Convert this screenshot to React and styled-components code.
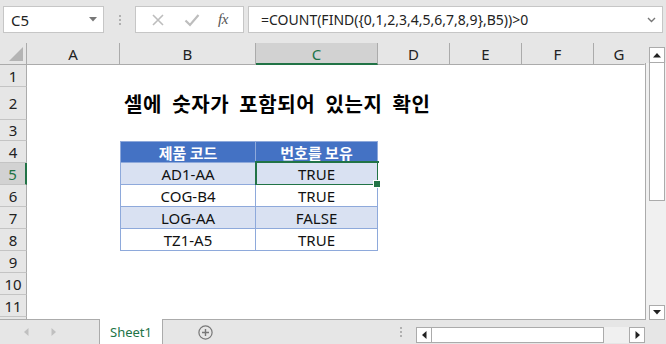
import React from "react";
import styled, { createGlobalStyle } from "styled-components";

const Global = createGlobalStyle`
  html, body { margin: 0; padding: 0; background: #ffffff; }
  * { box-sizing: border-box; }
`;

const UI = `"Noto Sans", "Open Sans", "Noto Sans CJK KR", sans-serif`;
const KR = `"Noto Sans CJK KR", "Noto Sans", sans-serif`;

const Root = styled.div`
  width: 666px;
  height: 344px;
  background: #e6e6e6;
  display: flex;
  flex-direction: column;
  overflow: hidden;
  font-family: ${UI};
`;

const Toolbar = styled.div`
  height: 43px;
  flex: none;
  display: flex;
  align-items: flex-start;
  padding: 6px 3px 0 3px;
`;

const NameBox = styled.div`
  width: 101px;
  height: 27px;
  background: #fff;
  border: 1px solid #c6c6c6;
  display: flex;
  align-items: center;
  justify-content: space-between;
  padding: 0 6px 0 7px;
  font-size: 15px;
  color: #222;
`;

const Grip = styled.div`
  width: 31px;
  height: 27px;
  display: flex;
  flex-direction: column;
  align-items: center;
  justify-content: center;
  gap: 2px;
  & > span {
    width: 2px;
    height: 2px;
    background: #b0b0b0;
  }
`;

const FxBox = styled.div`
  width: 109px;
  height: 27px;
  background: #fff;
  border: 1px solid #c6c6c6;
  display: flex;
  align-items: center;
  justify-content: space-around;
  padding: 0 6px;
`;

const Fx = styled.span`
  font-family: "Liberation Serif", "DejaVu Serif", serif;
  font-style: italic;
  font-size: 15px;
  color: #555;
  letter-spacing: -0.5px;
`;

const FormulaInput = styled.div`
  width: 415px;
  height: 27px;
  margin-left: 4px;
  background: #fff;
  border: 1px solid #c6c6c6;
  display: flex;
  align-items: center;
  justify-content: space-between;
  padding: 0 6px 0 12px;
  font-size: 14px;
  color: #222;
  white-space: nowrap;
`;

const Main = styled.div`
  height: 277px;
  flex: none;
  display: flex;
`;

const Sheet = styled.div`
  width: 645px;
  height: 277px;
  overflow: hidden;
  display: grid;
  grid-template-columns: 27px 93px 136px 122px 72px 72px 72px 51px;
  grid-template-rows: 22px 22px 33px 21px 22px 22px 22px 22px 22px 22px 22px 22px 22px;
  background: #fff;
  border-bottom: 1px solid #ababab;
`;

const Corner = styled.div`
  background: #e6e6e6;
  border-right: 1px solid #ababab;
  border-bottom: 1px solid #ababab;
  display: flex;
  align-items: flex-end;
  justify-content: flex-end;
  padding: 0 3px 3px 0;
`;

const ColHeader = styled.div`
  background: ${(p) => (p.$active ? "#d2d2d2" : "#e6e6e6")};
  color: ${(p) => (p.$active ? "#217346" : "#222")};
  border-right: 1px solid ${(p) => (p.$last ? "#e6e6e6" : "#ababab")};
  border-bottom: ${(p) => (p.$active ? "2px solid #217346" : "1px solid #ababab")};
  display: flex;
  align-items: center;
  justify-content: center;
  padding-top: ${(p) => (p.$active ? "1px" : "0")};
  font-size: 15px;
`;

const RowHeader = styled.div`
  background: ${(p) => (p.$active ? "#d2d2d2" : "#e6e6e6")};
  color: ${(p) => (p.$active ? "#217346" : "#222")};
  border-right: ${(p) => (p.$active ? "2px solid #217346" : "1px solid #ababab")};
  border-bottom: 1px solid #c4c4c4;
  display: flex;
  align-items: center;
  justify-content: center;
  font-size: 15px;
`;

const tableBorder = "#8ea9db";

const Cell = styled.div`
  position: relative;
  display: flex;
  align-items: center;
  justify-content: center;
  font-size: 15px;
  color: #111;
  white-space: nowrap;
  background: ${(p) =>
    p.$kind === "head" ? "#4472c4" : p.$kind === "band" ? "#d9e1f2" : "#fff"};
  ${(p) =>
    p.$kind
      ? `border-right: 1px solid ${tableBorder}; border-bottom: 1px solid ${tableBorder};`
      : ""}
  ${(p) => (p.$left ? `border-left: 1px solid ${tableBorder};` : "")}
  ${(p) => (p.$top ? `border-top: 1px solid ${tableBorder};` : "")}
  ${(p) =>
    p.$selected
      ? `
    &::after {
      content: "";
      position: absolute;
      left: -1px;
      top: -2px;
      right: -2px;
      bottom: -2px;
      border: 2px solid #217346;
      pointer-events: none;
    }
    &::before {
      content: "";
      position: absolute;
      right: -4px;
      bottom: -4px;
      width: 6px;
      height: 6px;
      background: #217346;
      border: 1px solid #fff;
      z-index: 2;
    }
  `
      : ""}
`;

const HeadText = styled.span`
  font-family: ${KR};
  font-weight: 700;
  font-size: 15px;
  color: #fff;
`;

const TitleCell = styled.div`
  display: flex;
  align-items: center;
  padding-left: 4px;
  overflow: visible;
  white-space: nowrap;
  position: relative;
  z-index: 1;
`;

const Title = styled.span`
  font-family: ${KR};
  font-weight: 700;
  font-size: 20px;
  letter-spacing: 0.6px;
  word-spacing: 5px;
  color: #000;
`;

const VScroll = styled.div`
  width: 21px;
  height: 277px;
  display: flex;
  flex-direction: column;
`;

const VTop = styled.div`
  height: 20px;
  flex: none;
  background: #e6e6e6;
  padding: 4px 1px 0 4px;
`;

const VTrack = styled.div`
  flex: 1;
  background: #f0f0f0;
  border-left: 1px solid #ababab;
  padding: 0 1px 0 3px;
  display: flex;
  flex-direction: column;
  justify-content: space-between;
`;

const ScrollBtn = styled.div`
  width: 16px;
  height: ${(p) => p.$h || 16}px;
  background: #fff;
  border: 1px solid #ababab;
  display: flex;
  align-items: center;
  justify-content: center;
  flex: none;
`;

const VThumb = styled.div`
  width: 16px;
  height: 138px;
  background: #fff;
  border: 1px solid #ababab;
  border-top: none;
`;

const TabBar = styled.div`
  flex: 1;
  display: flex;
  align-items: stretch;
  background: #e6e6e6;
`;

const NavArrows = styled.div`
  width: 99px;
  display: flex;
  align-items: center;
  padding-left: 24px;
  gap: 22px;
`;

const SheetTab = styled.div`
  width: 64px;
  margin-top: -1px;
  background: #fff;
  border-left: 1px solid #ababab;
  border-right: 1px solid #ababab;
  display: flex;
  align-items: center;
  justify-content: center;
  font-size: 13px;
  color: #217346;
`;

const AddBtn = styled.div`
  width: 84px;
  display: flex;
  align-items: center;
  justify-content: center;
`;

const Spacer = styled.div`
  flex: 1;
  display: flex;
  align-items: center;
  justify-content: flex-end;
  padding-right: 14px;
`;

const DotsV = styled.div`
  display: flex;
  flex-direction: column;
  gap: 2px;
  & > span {
    width: 2px;
    height: 2px;
    background: #b0b0b0;
  }
`;

const HScroll = styled.div`
  width: 229px;
  height: 16px;
  margin-top: 7px;
  margin-right: 21px;
  display: flex;
  background: #f0f0f0;
`;

const HThumb = styled.div`
  width: 172px;
  height: 16px;
  background: #fff;
  border: 1px solid #ababab;
  border-left: none;
`;

const HTrack = styled.div`
  flex: 1;
`;

const TriDown = ({ c = "#777", w = 8 }) => (
  <svg width={w} height={w / 2 + 1} viewBox="0 0 8 5">
    <path d="M0 0 L8 0 L4 4.5 Z" fill={c} />
  </svg>
);

const TriUp = () => (
  <svg width="8" height="5" viewBox="0 0 8 5">
    <path d="M0 4.5 L8 4.5 L4 0 Z" fill="#222" />
  </svg>
);

const TriLeft = ({ c = "#222" }) => (
  <svg width="5" height="8" viewBox="0 0 5 8">
    <path d="M4.5 0 L4.5 8 L0 4 Z" fill={c} />
  </svg>
);

const TriRight = ({ c = "#222" }) => (
  <svg width="5" height="8" viewBox="0 0 5 8">
    <path d="M0.5 0 L0.5 8 L5 4 Z" fill={c} />
  </svg>
);

const cols = ["A", "B", "C", "D", "E", "F", "G"];
const rowNumbers = [1, 2, 3, 4, 5, 6, 7, 8, 9, 10, 11, 12];

const tableRows = {
  5: ["AD1-AA", "TRUE", "band"],
  6: ["COG-B4", "TRUE", "plain"],
  7: ["LOG-AA", "FALSE", "band"],
  8: ["TZ1-A5", "TRUE", "plain"],
};

function renderRow(r) {
  const cells = [];
  cells.push(
    <RowHeader key={`h${r}`} $active={r === 5}>
      {r < 12 ? r : ""}
    </RowHeader>
  );
  cols.forEach((c) => {
    const key = `${c}${r}`;
    if (r === 2 && c === "B") {
      cells.push(
        <TitleCell key={key}>
          <Title>셀에 숫자가 포함되어 있는지 확인</Title>
        </TitleCell>
      );
      return;
    }
    if (r === 4 && (c === "B" || c === "C")) {
      cells.push(
        <Cell key={key} $kind="head" $left={c === "B"} $top>
          <HeadText>{c === "B" ? "제품 코드" : "번호를 보유"}</HeadText>
        </Cell>
      );
      return;
    }
    if (tableRows[r] && (c === "B" || c === "C")) {
      const [code, val, kind] = tableRows[r];
      cells.push(
        <Cell
          key={key}
          $kind={kind}
          $left={c === "B"}
          $selected={r === 5 && c === "C"}
        >
          {c === "B" ? code : val}
        </Cell>
      );
      return;
    }
    cells.push(<Cell key={key} />);
  });
  return cells;
}

export default function App() {
  return (
    <Root>
      <Global />
      <Toolbar>
        <NameBox>
          <span>C5</span>
          <TriDown />
        </NameBox>
        <Grip>
          <span />
          <span />
          <span />
        </Grip>
        <FxBox>
          <svg width="14" height="14" viewBox="0 0 14 14">
            <path d="M2 2 L12 12 M12 2 L2 12" stroke="#bdbdbd" strokeWidth="1.6" />
          </svg>
          <svg width="16" height="14" viewBox="0 0 16 14">
            <path d="M1.5 7.5 L6 12 L14.5 2" stroke="#bdbdbd" strokeWidth="2.2" fill="none" />
          </svg>
          <Fx>fx</Fx>
        </FxBox>
        <FormulaInput>
          <span>=COUNT(FIND({"{"}0,1,2,3,4,5,6,7,8,9{"}"},B5))&gt;0</span>
          <svg width="9" height="6" viewBox="0 0 9 6">
            <path d="M1 1 L4.5 4.5 L8 1" stroke="#777" strokeWidth="1.4" fill="none" />
          </svg>
        </FormulaInput>
      </Toolbar>
      <Main>
        <Sheet>
          <Corner>
            <svg width="14" height="14" viewBox="0 0 14 14">
              <path d="M14 0 L14 14 L0 14 Z" fill="#b4b4b4" />
            </svg>
          </Corner>
          {cols.map((c, i) => (
            <ColHeader key={c} $active={c === "C"} $last={i === cols.length - 1}>
              {c}
            </ColHeader>
          ))}
          {rowNumbers.map((r) => renderRow(r))}
        </Sheet>
        <VScroll>
          <VTop>
            <ScrollBtn $h={16}>
              <TriUp />
            </ScrollBtn>
          </VTop>
          <VTrack>
            <VThumb />
            <ScrollBtn $h={15}>
              <TriDown c="#222" />
            </ScrollBtn>
          </VTrack>
        </VScroll>
      </Main>
      <TabBar>
        <NavArrows>
          <TriLeft c="#c0c0c0" />
          <TriRight c="#c0c0c0" />
        </NavArrows>
        <SheetTab>Sheet1</SheetTab>
        <AddBtn>
          <svg width="15" height="15" viewBox="0 0 15 15">
            <circle cx="7.5" cy="7.5" r="6.6" stroke="#777" strokeWidth="1.2" fill="none" />
            <path d="M7.5 4 L7.5 11 M4 7.5 L11 7.5" stroke="#777" strokeWidth="1.4" />
          </svg>
        </AddBtn>
        <Spacer>
          <DotsV>
            <span />
            <span />
            <span />
          </DotsV>
        </Spacer>
        <HScroll>
          <ScrollBtn $h={16}>
            <TriLeft />
          </ScrollBtn>
          <HThumb />
          <HTrack />
          <ScrollBtn $h={16}>
            <TriRight />
          </ScrollBtn>
        </HScroll>
      </TabBar>
    </Root>
  );
}
